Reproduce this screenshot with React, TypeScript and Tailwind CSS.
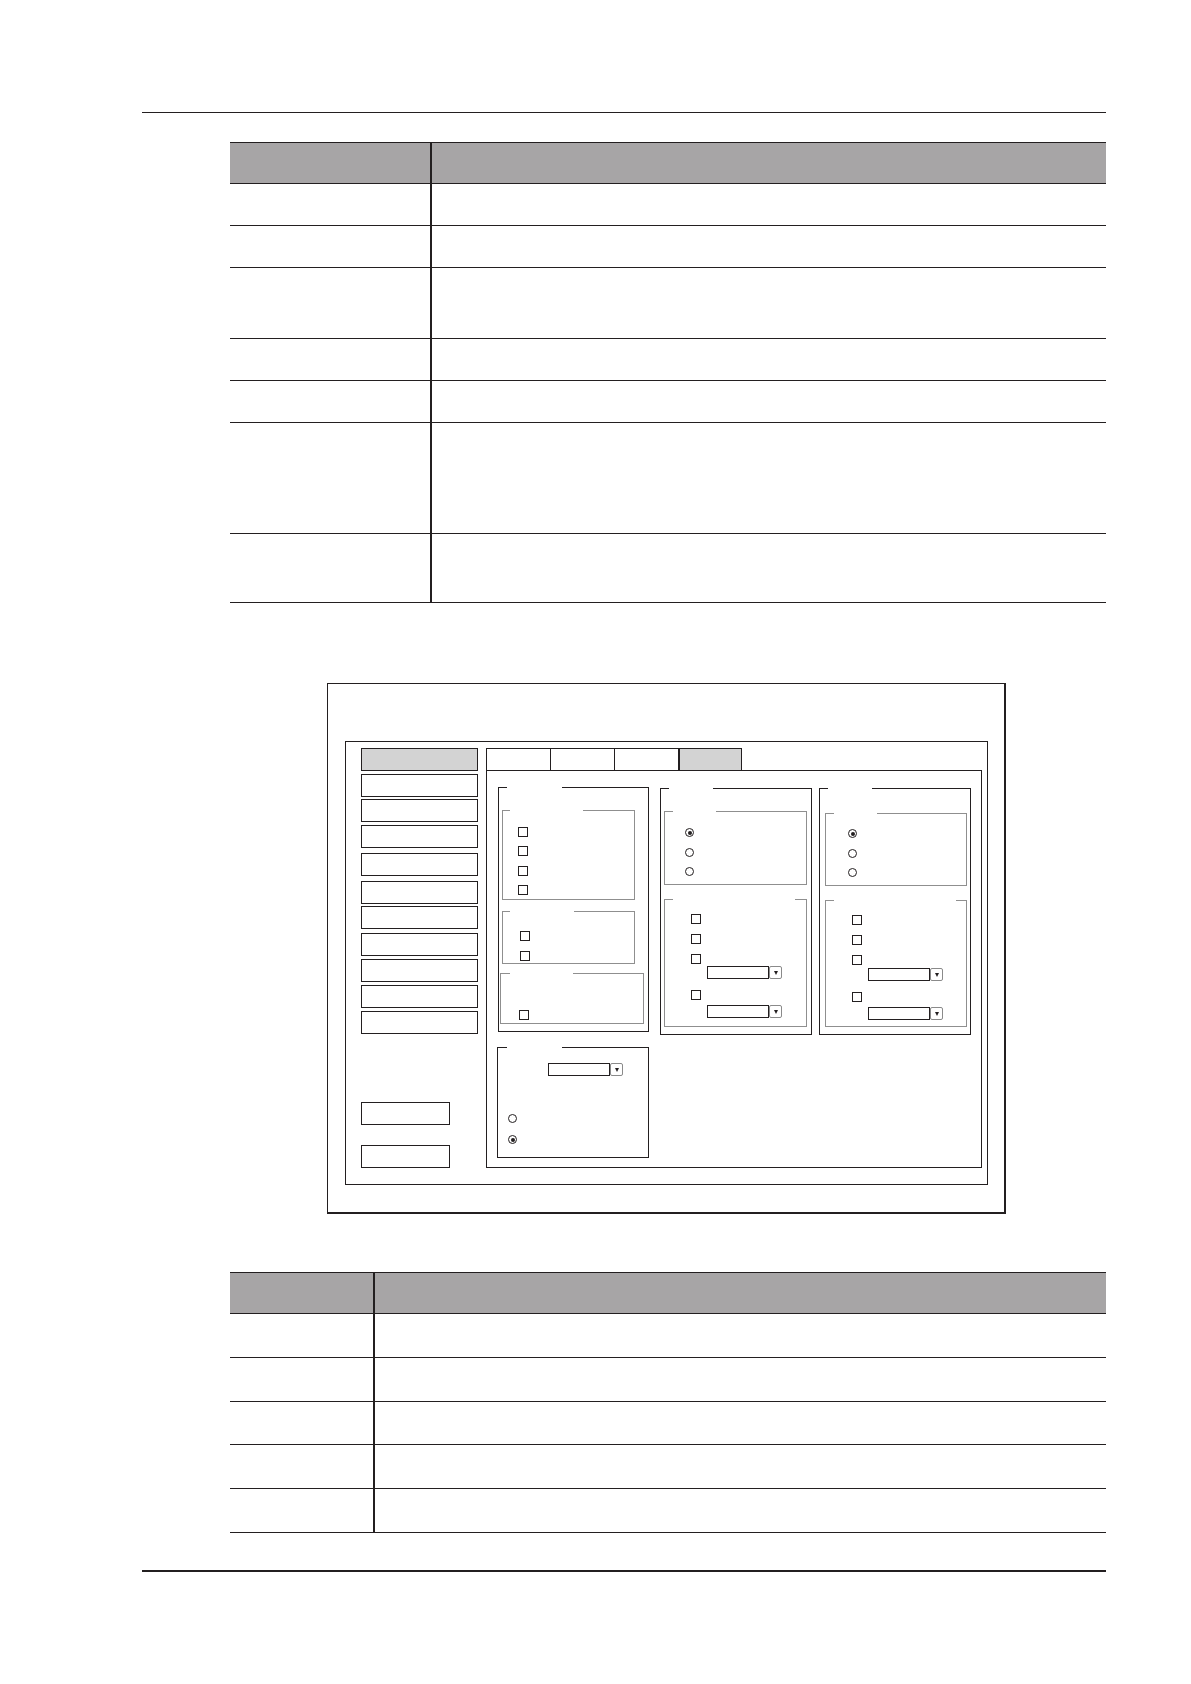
import React from "react";

// Spec page: two empty spec tables around a settings-dialog wireframe

type Kid = { children?: React.ReactNode };

const TABLE1_ROWS = ["h-[42px]", "h-[42px]", "h-[71px]", "h-[42px]", "h-[42px]", "h-[111px]", "h-[69px]"];
const TABLE2_ROWS = ["h-[44px]", "h-[44px]", "h-[43px]", "h-[44px]", "h-[44px]"];

// side menu spacing is a little uneven in the original
const NAV_GAPS = ["", "mt-[3px]", "mt-[2px]", "mt-[3px]", "mt-[5px]", "mt-[5px]", "mt-[2px]", "mt-[4px]", "mt-[3px]", "mt-[3px]", "mt-[3px]"];

function SpecTable({ firstCol, rows }: { firstCol: string; rows: string[] }) {
  return (
    <div className="ml-[230px] w-[876px]">
      <div className="flex h-[42px] border-y border-[#231f20] bg-[#a7a5a6]">
        <div className={firstCol} />
        <div className="flex-1 border-l-2 border-[#231f20]" />
      </div>
      {rows.map((h, i) => (
        <div key={i} className={`flex border-b border-[#231f20] ${h}`}>
          <div className={firstCol} />
          <div className="flex-1 border-l-2 border-[#231f20]" />
        </div>
      ))}
    </div>
  );
}

function Checkbox({ className = "" }: { className?: string }) {
  return <div className={`h-[10px] w-[10px] shrink-0 border border-[#231f20] bg-white ${className}`} />;
}

function Radio({ on = false }: { on?: boolean }) {
  return (
    <div className="flex h-[9px] w-[9px] shrink-0 items-center justify-center rounded-full border border-[#231f20] bg-white">
      {on && <div className="h-[4px] w-[4px] rounded-full bg-[#231f20]" />}
    </div>
  );
}

function Dropdown({ className = "" }: { className?: string }) {
  return (
    <div className={`flex items-center ${className}`}>
      <div className="h-[13px] w-[62px] border border-[#231f20] bg-white" />
      <div className="flex h-[13px] w-[13px] items-center justify-center rounded-[2px] border border-[#8a8a8a] bg-white">
        <div className="h-0 w-0 border-x-[2.5px] border-t-[4px] border-x-transparent border-t-[#231f20]" />
      </div>
    </div>
  );
}

// framed box with a blank gap in the top edge where the caption sits
function Frame({ className, gap, sub = false, children }: { className: string; gap: string; sub?: boolean } & Kid) {
  return (
    <div className={`relative shrink-0 border ${sub ? "border-[#8f8f8f]" : "border-[#231f20]"} ${className}`}>
      <span className={`absolute -top-px h-px bg-white ${gap}`} />
      {children}
    </div>
  );
}

function Nav() {
  return (
    <div className="flex w-[117px] shrink-0 flex-col">
      <div className="flex flex-col">
        {NAV_GAPS.map((mt, i) => (
          <div
            key={i}
            className={`h-[23px] border border-[#231f20] ${mt} ${i === 0 ? "bg-[#d3d3d3]" : "bg-white"}`}
          />
        ))}
      </div>
      <div className="mt-auto flex flex-col gap-[20px]">
        <div className="h-[23px] w-[89px] border border-[#231f20]" />
        <div className="h-[23px] w-[89px] border border-[#231f20]" />
      </div>
    </div>
  );
}

function ChannelBox({ className, gap, subPad, radioPad, subB, ddGap }: {
  className: string;
  gap: string;
  subPad: string;
  radioPad: string;
  subB: string;
  ddGap: string;
}) {
  return (
    <Frame className={`flex flex-col ${className}`} gap={gap}>
      <Frame sub className={`flex flex-col ${subPad}`} gap="left-[8px] w-[43px]">
        <div className={`flex flex-col gap-[10.5px] ${radioPad}`}>
          <Radio on />
          <Radio />
          <Radio />
        </div>
      </Frame>
      <Frame sub className={`mt-[14px] flex flex-col pl-[26px] pt-[14px] ${subB}`} gap="left-[8px] w-[122px]">
        <Checkbox />
        <Checkbox className="mt-[10px]" />
        <Checkbox className="mt-[10px]" />
        <Dropdown className={`ml-[16px] ${ddGap}`} />
        <Checkbox className="mt-[11px]" />
        <Dropdown className="ml-[16px] mt-[5px]" />
      </Frame>
    </Frame>
  );
}

function Panel() {
  return (
    <div className="flex flex-1 flex-col border border-[#231f20] pl-[11px] pt-[16px]">
      <div className="flex items-start">
        <Frame className="flex h-[245px] w-[151px] flex-col" gap="left-[8px] w-[55px]">
          <Frame sub className="ml-[3px] mt-[22px] h-[90px] w-[133px]" gap="left-[7px] w-[73px]">
            <div className="flex flex-col gap-[9.3px] pl-[15px] pt-[16px]">
              <Checkbox />
              <Checkbox />
              <Checkbox />
              <Checkbox />
            </div>
          </Frame>
          <Frame sub className="ml-[3px] mt-[11px] h-[53px] w-[133px]" gap="left-[7px] w-[64px]">
            <div className="flex flex-col gap-[10px] pl-[17px] pt-[19px]">
              <Checkbox />
              <Checkbox />
            </div>
          </Frame>
          <Frame sub className="ml-[1px] mt-[9px] h-[51px] w-[144px]" gap="left-[9px] w-[63px]">
            <div className="pl-[18px] pt-[36px]">
              <Checkbox />
            </div>
          </Frame>
        </Frame>

        <ChannelBox
          className="ml-[11px] mt-px h-[247px] w-[152px]"
          gap="left-[8px] w-[44px]"
          subPad="ml-[3px] mt-[22px] h-[74px] w-[143px]"
          radioPad="pl-[20px] pt-[16px]"
          subB="ml-[3px] h-[128px] w-[143px]"
          ddGap="mt-[2px]"
        />
        <ChannelBox
          className="ml-[7px] mt-px h-[247px] w-[152px]"
          gap="left-[8px] w-[44px]"
          subPad="ml-[5px] mt-[24px] h-[73px] w-[142px]"
          radioPad="pl-[22px] pt-[15px]"
          subB="ml-[5px] h-[127px] w-[142px]"
          ddGap="mt-[3px]"
        />
      </div>

      <Frame className="-ml-px mt-[12px] flex h-[111px] w-[152px] flex-col pl-[10px] pt-[15px]" gap="left-[9px] w-[55px]">
        <Dropdown className="ml-[40px]" />
        <div className="mt-[38px]">
          <Radio />
        </div>
        <div className="mt-[12px]">
          <Radio on />
        </div>
      </Frame>
    </div>
  );
}

function DialogSketch() {
  return (
    <div className="ml-[327px] mt-[80px] w-[679px] border-b-2 border-l border-r-2 border-t border-[#231f20] pb-[27px] pl-[17px] pr-[16px] pt-[57px]">
      <div className="flex h-[444px] border border-[#231f20] pb-[16px] pl-[15px] pr-[5px] pt-[6px]">
        <Nav />
        <div className="ml-[8px] flex flex-1 flex-col">
          <div className="flex h-[22px]">
            <div className="w-[64px] border-l border-t border-[#231f20]" />
            <div className="w-[64px] border-l border-t border-[#231f20]" />
            <div className="w-[64px] border-l border-t border-[#231f20]" />
            <div className="w-[64px] border-l-2 border-r border-t border-[#231f20] bg-[#d3d3d3]" />
          </div>
          <Panel />
        </div>
      </div>
    </div>
  );
}

export default function App() {
  return (
    <div className="min-h-[1684px] w-[1191px] bg-white pt-[112px] font-['Liberation_Sans',sans-serif]">
      <div className="ml-[142px] h-px w-[964px] bg-[#231f20]" />
      <div className="mt-[29px]">
        <SpecTable firstCol="w-[200px] shrink-0" rows={TABLE1_ROWS} />
      </div>
      <DialogSketch />
      <div className="mt-[58px]">
        <SpecTable firstCol="w-[143px] shrink-0" rows={TABLE2_ROWS} />
      </div>
      <div className="ml-[142px] mt-[37px] h-[2px] w-[964px] bg-[#231f20]" />
    </div>
  );
}
